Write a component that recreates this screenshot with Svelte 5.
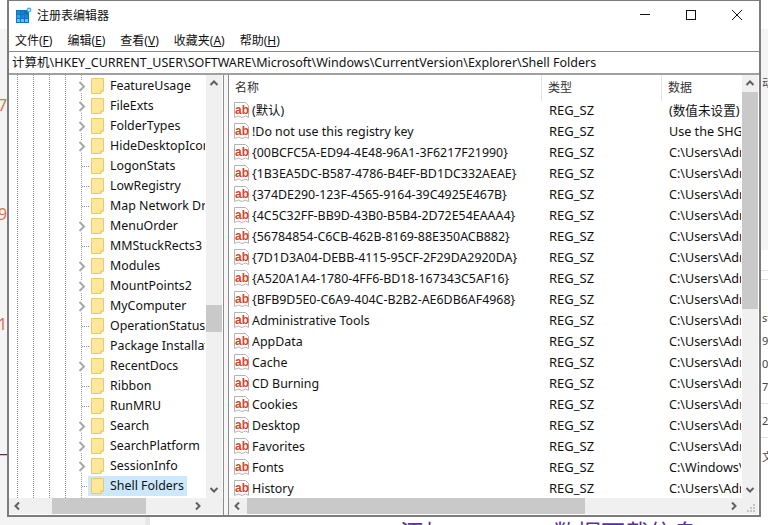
<script lang="ts">
  const menus = [
    ['文件(', 'F', ')'],
    ['编辑(', 'E', ')'],
    ['查看(', 'V', ')'],
    ['收藏夹(', 'A', ')'],
    ['帮助(', 'H', ')']
  ];

  const keys = [
    { name: 'FeatureUsage', more: true },
    { name: 'FileExts', more: true },
    { name: 'FolderTypes', more: true },
    { name: 'HideDesktopIcons', more: true },
    { name: 'LogonStats', more: false },
    { name: 'LowRegistry', more: false },
    { name: 'Map Network Drive MRU', more: false },
    { name: 'MenuOrder', more: true },
    { name: 'MMStuckRects3', more: false },
    { name: 'Modules', more: true },
    { name: 'MountPoints2', more: true },
    { name: 'MyComputer', more: true },
    { name: 'OperationStatusManager', more: false },
    { name: 'Package Installation', more: false },
    { name: 'RecentDocs', more: true },
    { name: 'Ribbon', more: false },
    { name: 'RunMRU', more: false },
    { name: 'Search', more: true },
    { name: 'SearchPlatform', more: true },
    { name: 'SessionInfo', more: true },
    { name: 'Shell Folders', more: false, selected: true }
  ];

  const users = 'C:\\Users\\Administrator';
  const values = [
    ['(默认)', '(数值未设置)'],
    ['!Do not use this registry key', 'Use the SHGetFolderPath'],
    ['{00BCFC5A-ED94-4E48-96A1-3F6217F21990}', users],
    ['{1B3EA5DC-B587-4786-B4EF-BD1DC332AEAE}', users],
    ['{374DE290-123F-4565-9164-39C4925E467B}', users],
    ['{4C5C32FF-BB9D-43B0-B5B4-2D72E54EAAA4}', users],
    ['{56784854-C6CB-462B-8169-88E350ACB882}', users],
    ['{7D1D3A04-DEBB-4115-95CF-2F29DA2920DA}', users],
    ['{A520A1A4-1780-4FF6-BD18-167343C5AF16}', users],
    ['{BFB9D5E0-C6A9-404C-B2B2-AE6DB6AF4968}', users],
    ['Administrative Tools', users],
    ['AppData', users],
    ['Cache', users],
    ['CD Burning', users],
    ['Cookies', users],
    ['Desktop', users],
    ['Favorites', users],
    ['Fonts', 'C:\\Windows\\Fonts'],
    ['History', users]
  ];
</script>

<div class="backdrop">
  <span class="mark mark-orange" style="top: 96px">7</span>
  <span class="mark mark-orange" style="top: 205px">9</span>
  <span class="mark mark-orange" style="top: 315px">1</span>
  <span class="mark mark-dark" style="top: 452px">飞</span>
  <span class="side" style="top: 76px">动</span>
  <span class="side" style="top: 311px">st</span>
  <span class="side" style="top: 334px">94</span>
  <span class="side" style="top: 357px">09</span>
  <span class="side" style="top: 380px">7,</span>
  <span class="side" style="top: 414px">2</span>
  <span class="side" style="top: 450px">文</span>
  <span class="caption" style="left: 400px">添加</span>
  <span class="caption" style="left: 553px">数据下载信息</span>
</div>

<div class="window">
  <header class="titlebar">
    <svg class="app-icon" width="16" height="16" viewBox="0 0 16 16">
      <rect x="0" y="3" width="13" height="13" fill="#0a78c8" />
      <rect x="1" y="4" width="3" height="3" fill="#1e88d8" />
      <rect x="5" y="4" width="3" height="3" fill="#1180d0" />
      <rect x="9" y="4" width="3" height="3" fill="#0d6fb8" />
      <rect x="1" y="8" width="3" height="3" fill="#3aa6ea" />
      <rect x="5" y="8" width="3" height="3" fill="#1a86d6" />
      <rect x="9" y="8" width="3" height="3" fill="#1a86d6" />
      <rect x="1" y="12" width="3" height="3" fill="#5cc4f6" />
      <rect x="5" y="12" width="3" height="3" fill="#5cc4f6" />
      <rect x="9" y="12" width="3" height="3" fill="#5cc4f6" />
      <circle cx="13" cy="3" r="2.4" fill="#45aeea" />
      <circle cx="13" cy="3" r="0.9" fill="#ffffff" />
    </svg>
    <span class="title">注册表编辑器</span>
    <div class="controls">
      <svg width="12" height="12" viewBox="0 0 12 12"><path d="M1 5.500h10" stroke="#111" /></svg>
      <svg width="12" height="12" viewBox="0 0 12 12"><rect x="1.500" y="1.500" width="9" height="9" fill="none" stroke="#111" /></svg>
      <svg width="12" height="12" viewBox="0 0 12 12"><path d="M1 1l10 10M11 1L1 11" stroke="#111" /></svg>
    </div>
  </header>

  <nav class="menubar">
    {#each menus as [before, key, after]}
      <span class="menu">{before}<u>{key}</u>{after}</span>
    {/each}
  </nav>

  <div class="address">计算机\HKEY_CURRENT_USER\SOFTWARE\Microsoft\Windows\CurrentVersion\Explorer\Shell Folders</div>

  <div class="panes">
    <section class="tree-pane">
      <div class="tree-top">
        <div class="tree">
          {#each keys as key}
            <div class="key">
              <span class="expander">
                {#if key.more}
                  <svg width="8" height="13" viewBox="0 0 8 13"><path d="M1.500 2l4.500 4.500L1.500 11" fill="none" stroke="#a8a8a8" stroke-width="2" /></svg>
                {:else}
                  <span class="stub"></span>
                {/if}
              </span>
              <svg class="folder" width="14" height="16" viewBox="0 0 14 16">
                <path d="M.5.5h12v12.500h-2.500v2.500H.5z" fill="#ffe79c" stroke="#ecca62" />
                <path d="M10 15.500v-2.500h3" fill="none" stroke="#ecca62" />
              </svg>
              <span class="key-name" class:selected={key.selected}>{key.name}</span>
            </div>
          {/each}
        </div>
        <div class="vbar">
          <svg class="arrow" width="16" height="16" viewBox="0 0 16 16"><path d="M4.500 10L8 6.500L11.500 10" fill="none" stroke="#606060" stroke-width="2" /></svg>
          <div class="vtrack"><div class="vthumb tree-thumb"></div></div>
          <svg class="arrow" width="16" height="16" viewBox="0 0 16 16"><path d="M4.500 6L8 9.500L11.500 6" fill="none" stroke="#606060" stroke-width="2" /></svg>
        </div>
      </div>
      <div class="hbar tree-hbar">
        <svg class="arrow" width="16" height="16" viewBox="0 0 16 16"><path d="M10 4.500L6.500 8L10 11.500" fill="none" stroke="#606060" stroke-width="2" /></svg>
        <div class="htrack"><div class="hthumb tree-hthumb"></div></div>
        <svg class="arrow" width="16" height="16" viewBox="0 0 16 16"><path d="M6 4.500L9.500 8L6 11.500" fill="none" stroke="#606060" stroke-width="2" /></svg>
      </div>
    </section>

    <div class="split"></div>

    <section class="list-pane">
      <div class="list-top">
        <div class="list">
          <div class="columns">
            <span class="col col-name">名称</span>
            <span class="col col-type">类型</span>
            <span class="col col-data">数据</span>
          </div>
          {#each values as [name, data]}
            <div class="value">
              <span class="value-name">
                <svg class="ab" width="16" height="17" viewBox="0 0 16 17">
                  <path d="M.5.500h11l3 3v12l-3-1.500-3.500 1.500-3.500-1.500-4 1.500z" fill="#fff" stroke="#b4b4b4" />
                  <text x="1" y="11.500" class="ab-text">ab</text>
                </svg>
                {name}
              </span>
              <span class="value-type">REG_SZ</span>
              <span class="value-data">{data}</span>
            </div>
          {/each}
        </div>
        <div class="vbar">
          <svg class="arrow" width="16" height="16" viewBox="0 0 16 16"><path d="M4.500 10L8 6.500L11.500 10" fill="none" stroke="#606060" stroke-width="2" /></svg>
          <div class="vtrack"><div class="vthumb list-thumb"></div></div>
          <svg class="arrow" width="16" height="16" viewBox="0 0 16 16"><path d="M4.500 6L8 9.500L11.500 6" fill="none" stroke="#606060" stroke-width="2" /></svg>
        </div>
      </div>
      <div class="hbar">
        <svg class="arrow" width="16" height="16" viewBox="0 0 16 16"><path d="M10 4.500L6.500 8L10 11.500" fill="none" stroke="#606060" stroke-width="2" /></svg>
        <div class="htrack"><div class="hthumb list-hthumb"></div></div>
        <svg class="arrow" width="16" height="16" viewBox="0 0 16 16"><path d="M6 4.500L9.500 8L6 11.500" fill="none" stroke="#606060" stroke-width="2" /></svg>
        <svg class="grip" width="16" height="16" viewBox="0 0 16 16">
          <path d="M11 6h2v2h-2zM8 9h2v2H8zM11 9h2v2h-2zM5 12h2v2H5zM8 12h2v2H8zM11 12h2v2h-2z" fill="#c4c4c4" />
        </svg>
      </div>
    </section>
  </div>
</div>

<style>
  :global(body) {
    margin: 0;
    background: #fff;
    overflow: hidden;
    font-family: "Noto Sans", "Noto Sans CJK SC", sans-serif;
    font-size: 12.400px;
    color: #111;
  }

  .backdrop {
    position: absolute;
    inset: 0;
    overflow: hidden;
    background:
      linear-gradient(#fff, #fff) 0 0 / 100% 29px no-repeat,
      linear-gradient(#fff, #fff) 150px 517px / 100% 8px no-repeat,
      linear-gradient(#e8e8e8, #e8e8e8) 145px 517px / 5px 8px no-repeat,
      linear-gradient(#e2e2e2, #e2e2e2) 761px 270px / 7px 1px no-repeat,
      linear-gradient(#e2e2e2, #e2e2e2) 761px 279px / 7px 1px no-repeat,
      linear-gradient(#e2e2e2, #e2e2e2) 761px 403px / 7px 1px no-repeat,
      linear-gradient(#e2e2e2, #e2e2e2) 761px 437px / 7px 1px no-repeat,
      linear-gradient(#fff, #fff) 761px 250px / 7px 275px no-repeat,
      #f4f4f4;
  }

  .mark {
    position: absolute;
    left: -2px;
    font-size: 16px;
    line-height: 18px;
  }

  .mark-orange {
    color: #e2704a;
  }

  .mark-dark {
    color: #5a2a50;
  }

  .side {
    position: absolute;
    left: 762px;
    font-size: 11px;
    line-height: 13px;
    color: #444;
  }

  .caption {
    position: absolute;
    top: 518px;
    font-size: 24px;
    line-height: 30px;
    color: #5b2fa0;
  }

  .window {
    position: relative;
    margin-left: 7px;
    width: 754px;
    height: 517px;
    box-sizing: border-box;
    border: 2px solid #7c7c7c;
    border-top-width: 1px;
    background: #fff;
    display: flex;
    flex-direction: column;
  }

  .titlebar {
    height: 29px;
    display: flex;
    align-items: center;
    flex: none;
  }

  .app-icon {
    margin-left: 7px;
    margin-top: -1px;
  }

  .title {
    margin-left: 5px;
    margin-top: -2px;
    font-size: 12px;
  }

  .controls {
    margin-left: auto;
    display: flex;
    gap: 34px;
    margin-right: 16px;
    margin-top: -1px;
  }

  .menubar {
    height: 19px;
    padding-bottom: 2px;
    display: flex;
    align-items: center;
    padding-left: 6px;
    gap: 15px;
    flex: none;
  }

  .menu {
    font-size: 12px;
  }

  .address {
    height: 21px;
    line-height: 21px;
    font-size: 12.500px;
    flex: none;
    border-top: 1px solid #8a8a8a;
    border-bottom: 2px solid #a0a0a0;
    padding-left: 3px;
    white-space: nowrap;
    overflow: hidden;
  }

  .panes {
    flex: 1;
    min-height: 0;
    display: flex;
  }

  .tree-pane,
  .list-pane {
    display: flex;
    flex-direction: column;
    min-width: 0;
  }

  .tree-pane {
    width: 214px;
    flex: none;
    border-right: 1px solid #8c8c8c;
  }

  .split {
    width: 4px;
    flex: none;
    background: #f6f6f6;
    border-right: 1px solid #8c8c8c;
  }

  .list-pane {
    flex: 1;
    margin-right: 1px;
  }

  .tree-top,
  .list-top {
    flex: 1;
    min-height: 0;
    display: flex;
  }

  .tree {
    width: 197px;
    flex: none;
    overflow: hidden;
    padding-top: 1px;
    box-sizing: border-box;
    background-image:
      linear-gradient(#8c8c8c 50%, transparent 50%),
      linear-gradient(#8c8c8c 50%, transparent 50%),
      linear-gradient(#8c8c8c 50%, transparent 50%),
      linear-gradient(#8c8c8c 50%, transparent 50%),
      linear-gradient(#9a9a9a 50%, transparent 50%);
    background-size: 1px 2px;
    background-repeat: repeat-y;
    background-position: 8px 0, 24px 0, 40px 0, 56px 0, 72px 0;
  }

  .key {
    height: 20px;
    width: 196px;
    box-sizing: border-box;
    overflow: hidden;
    display: flex;
    align-items: center;
    padding-left: 69px;
    white-space: nowrap;
  }

  .expander {
    width: 13px;
    flex: none;
    height: 20px;
    display: flex;
    align-items: center;
  }

  .expander svg {
    display: block;
    background: #fff;
  }

  .stub {
    display: block;
    width: 7px;
    margin-left: 4px;
    border-top: 1px dotted #8c8c8c;
  }

  .folder {
    flex: none;
  }

  .key-name {
    margin-left: 2px;
    padding: 0 3px;
    height: 20px;
    line-height: 20px;
  }

  .key-name.selected {
    background: #cce8ff;
    margin-left: -17px;
    padding-left: 22px;
    padding-right: 3px;
  }

  .key:has(.selected) .folder {
    position: relative;
    z-index: 1;
  }

  .vbar {
    width: 16px;
    flex: none;
    background: #f0f0f0;
    display: flex;
    flex-direction: column;
  }

  .tree-top .vbar {
    margin-right: 1px;
  }

  .arrow {
    flex: none;
    display: block;
  }

  .vtrack {
    flex: 1;
    min-height: 0;
    position: relative;
  }

  .vthumb {
    position: absolute;
    left: 0;
    right: 0;
    background: #c9c9c9;
  }

  .tree-thumb {
    top: 214px;
    height: 27px;
  }

  .list-thumb {
    top: 1px;
    height: 217px;
  }

  .hbar {
    height: 16px;
    flex: none;
    display: flex;
    background: #f0f0f0;
    margin-bottom: 1px;
  }

  .tree-hbar {
    padding-right: 17px;
  }

  .htrack {
    flex: 1;
    position: relative;
  }

  .hthumb {
    position: absolute;
    top: 0;
    bottom: 0;
    background: #c9c9c9;
  }

  .tree-hthumb {
    left: 27px;
    width: 94px;
  }

  .list-hthumb {
    left: 2px;
    width: 338px;
  }

  .grip {
    flex: none;
  }

  .list {
    flex: 1;
    min-width: 0;
    overflow: hidden;
  }

  .columns,
  .value {
    display: grid;
    grid-template-columns: 313px 120px 1fr;
  }

  .columns {
    height: 25px;
  }

  .col {
    padding-left: 6px;
    line-height: 26px;
    color: #333;
    font-size: 12px;
    border-right: 1px solid #e5e5e5;
  }

  .col-data {
    border-right: 0;
  }

  .value {
    height: 21px;
    line-height: 21px;
    white-space: nowrap;
  }

  .value-name {
    display: flex;
    align-items: center;
    gap: 2px;
    padding-left: 5px;
    overflow: hidden;
  }

  .ab {
    flex: none;
  }

  .ab-text {
    font-family: "Liberation Sans", sans-serif;
    font-weight: 700;
    font-size: 12px;
    fill: #d8462a;
  }

  .value-type,
  .value-data {
    padding-left: 7px;
    overflow: hidden;
  }

  .value-type {
    font-size: 13px;
  }

  .value-data {
    font-size: 12.600px;
    margin-right: 1px;
  }
</style>
